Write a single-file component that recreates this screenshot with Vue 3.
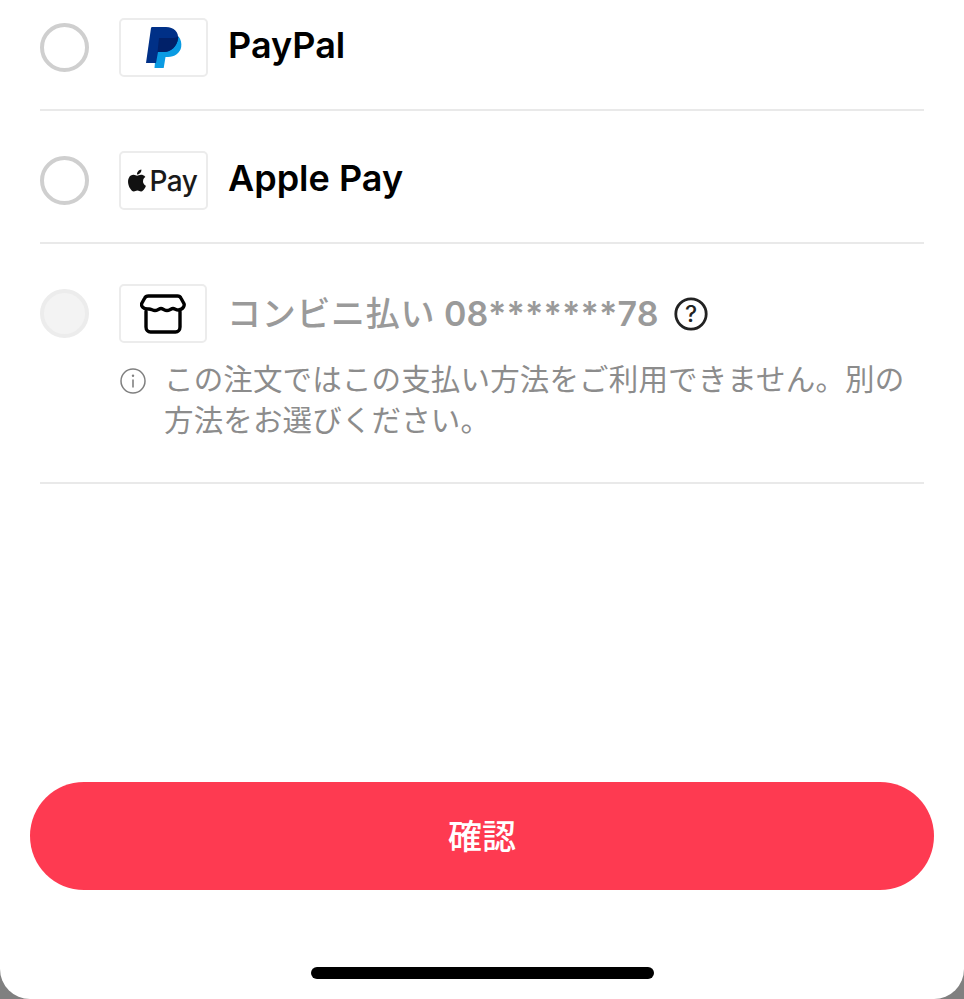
<script setup>
const note = 'この注文ではこの支払い方法をご利用できません。別の方法をお選びください。'
</script>

<template>
  <main class="screen">
    <section class="methods">
      <div class="row row-first">
        <span class="radio"></span>
        <span class="logo">
          <svg viewBox="0 0 37 42" width="37" height="42" aria-hidden="true">
            <path fill="#0a9be3" d="M12 11h14c3 0 6-.500 7.500-1.500 2.500 3 3.300 6.700 2.700 10.500-1 6-6.700 10-13.200 10h-2.500l-1.800 11H9.500z" />
            <path fill="#003087" d="M6 1c.100-.600.600-1 1.200-1H21c8 0 13 5 12 12-1 7-7 13-14 13h-6l-2 11H1z" />
            <path fill="#012169" d="M14 11h12c3 0 5.700-.500 7.400-1.500 0 .900-.200 1.700-.400 2.500-1 7-7 13-14 13h-6.500z" />
          </svg>
        </span>
        <span class="name">PayPal</span>
      </div>

      <div class="row row-plain">
        <span class="radio"></span>
        <span class="logo">
          <svg class="apple" viewBox="0 0 24 24" width="22" height="25" aria-hidden="true">
            <path fill="#111" d="M12.152 6.896c-.948 0-2.415-1.078-3.96-1.04-2.04.027-3.91 1.183-4.961 3.014-2.117 3.675-.546 9.103 1.519 12.09 1.013 1.454 2.208 3.09 3.792 3.039 1.52-.065 2.09-.987 3.935-.987 1.831 0 2.35.987 3.96.948 1.637-.026 2.676-1.48 3.676-2.948 1.156-1.688 1.636-3.325 1.662-3.415-.039-.013-3.182-1.221-3.22-4.857-.026-3.04 2.48-4.494 2.597-4.559-1.429-2.09-3.623-2.324-4.39-2.376-2-.156-3.675 1.09-4.61 1.09zM15.530 3.830c.843-1.012 1.400-2.427 1.245-3.830-1.207.052-2.662.805-3.532 1.818-.780.896-1.454 2.338-1.273 3.714 1.338.104 2.715-.688 3.559-1.701" />
          </svg>
          <span class="pay">Pay</span>
        </span>
        <span class="name">Apple Pay</span>
      </div>

      <div class="row row-disabled">
        <div class="row-main">
          <span class="radio radio-off"></span>
          <span class="logo logo-store">
            <svg viewBox="0 0 46 40" width="46" height="40" fill="none" stroke="#000" stroke-width="3.400" stroke-linejoin="round" stroke-linecap="round" aria-hidden="true">
              <path d="M8.500 2h29c1.500 0 2.800.800 3.500 2.200l2.900 5.300c.800 1.700-.200 6-5.400 6.500-2.500.200-3.500-1.500-5.500-1.500s-3.500 2-6 2-4-2-6-2-3.500 2-6 2-3.500-1.500-6-1.500C2.300 15.500 1 11.200 1.700 9.500L4.600 4.200C5.300 2.800 7 2 8.500 2z" />
              <path d="M6 17.500V33c0 3 2 5 4.500 5h25c2.500 0 4.500-2 4.500-5V17.500" />
            </svg>
          </span>
          <span class="name name-off"><span class="kana">コンビニ払い</span> 08*******78</span>
          <svg class="help" viewBox="0 0 34 34" width="34" height="34" aria-hidden="true">
            <circle cx="17" cy="17" r="15.200" fill="none" stroke="#222" stroke-width="2.800" />
            <text x="17" y="25" text-anchor="middle" class="help-mark">?</text>
          </svg>
        </div>
        <div class="notice">
          <svg class="info" viewBox="0 0 26 26" width="26" height="26" aria-hidden="true">
            <circle cx="13" cy="13" r="12" fill="none" stroke="#808080" stroke-width="1.500" />
            <circle cx="13" cy="7.800" r="1.200" fill="#808080" />
            <path d="M13 11.500v8" stroke="#808080" stroke-width="1.600" />
          </svg>
          <p>{{ note }}</p>
        </div>
      </div>
    </section>

    <button class="confirm" type="button">確認</button>
    <div class="home-bar"></div>
  </main>
</template>

<style>
html, body { margin: 0; background: #808080; }
</style>

<style scoped>
.screen {
  box-sizing: border-box;
  width: 964px;
  height: 999px;
  overflow: hidden;
  display: flex;
  flex-direction: column;
  background: #fff;
  border-radius: 0 0 30px 30px;
  font-family: Inter, "Noto Sans CJK JP", sans-serif;
}
.methods { margin: 0 40px; }
.row {
  display: flex;
  align-items: flex-start;
  border-bottom: 2px solid #e9e9e9;
}
.row-first { height: 109px; }
.row-first .radio { margin-top: 23px; }
.row-first .logo { margin-top: 18px; }
.row-first .name { margin-top: 23px; }
.row-plain { height: 131px; }
.row-plain .radio { margin-top: 45px; }
.row-plain .logo { margin-top: 40px; }
.row-plain .name { margin-top: 45px; }
.radio {
  box-sizing: border-box;
  flex: none;
  width: 49px;
  height: 49px;
  border: 4px solid #cfcfcf;
  border-radius: 50%;
  margin-right: 30px;
}
.radio-off { background: #f3f3f3; border-color: #ececec; }
.logo {
  box-sizing: border-box;
  flex: none;
  width: 89px;
  height: 59px;
  border: 2px solid #ececec;
  border-radius: 5px;
  margin-right: 20px;
  display: flex;
  align-items: center;
  justify-content: center;
  gap: 2px;
}
.logo-store { width: 88px; margin-right: 20px; }
.apple { margin-top: -1px; margin-left: -2px; }
.pay {
  font-size: 28px;
  font-weight: 500;
  letter-spacing: -0.5px;
  color: #1a1a1a;
  line-height: 1;
  margin-right: 2px;
}
.name {
  font-size: 36px;
  font-weight: 600;
  line-height: 44px;
  color: #000;
  white-space: nowrap;
}
.row-disabled {
  display: block;
  height: 238px;
}
.row-main {
  display: flex;
  align-items: center;
  padding-top: 40px;
}
.name-off { color: #9a9a9a; font-size: 34px; font-weight: 600; letter-spacing: 0.15px; }
.kana { font-weight: 500; letter-spacing: 0.7px; }
.help { margin-left: 15px; }
.help-mark {
  font-family: Inter, sans-serif;
  font-size: 23px;
  font-weight: 500;
  fill: #222;
}
.notice {
  display: flex;
  align-items: flex-start;
  margin: 16px 0 0 80px;
}
.info { flex: none; margin: 9px 18px 0 0; }
.notice p {
  margin: 0;
  width: 745px;
  font-size: 29.500px;
  letter-spacing: 0.15px;
  line-height: 41px;
  font-weight: 400;
  color: #8c8c8c;
}
.confirm {
  flex: none;
  align-self: center;
  width: 904px;
  height: 108px;
  margin-top: 298px;
  padding: 0 0 4px;
  border: 0;
  border-radius: 54px;
  background: #fe3a51;
  color: #fff;
  font-family: inherit;
  font-size: 34px;
  font-weight: 500;
}
.home-bar {
  flex: none;
  align-self: center;
  width: 343px;
  height: 12px;
  margin: 77px 0 0 1px;
  border-radius: 6px;
  background: #000;
}
</style>
